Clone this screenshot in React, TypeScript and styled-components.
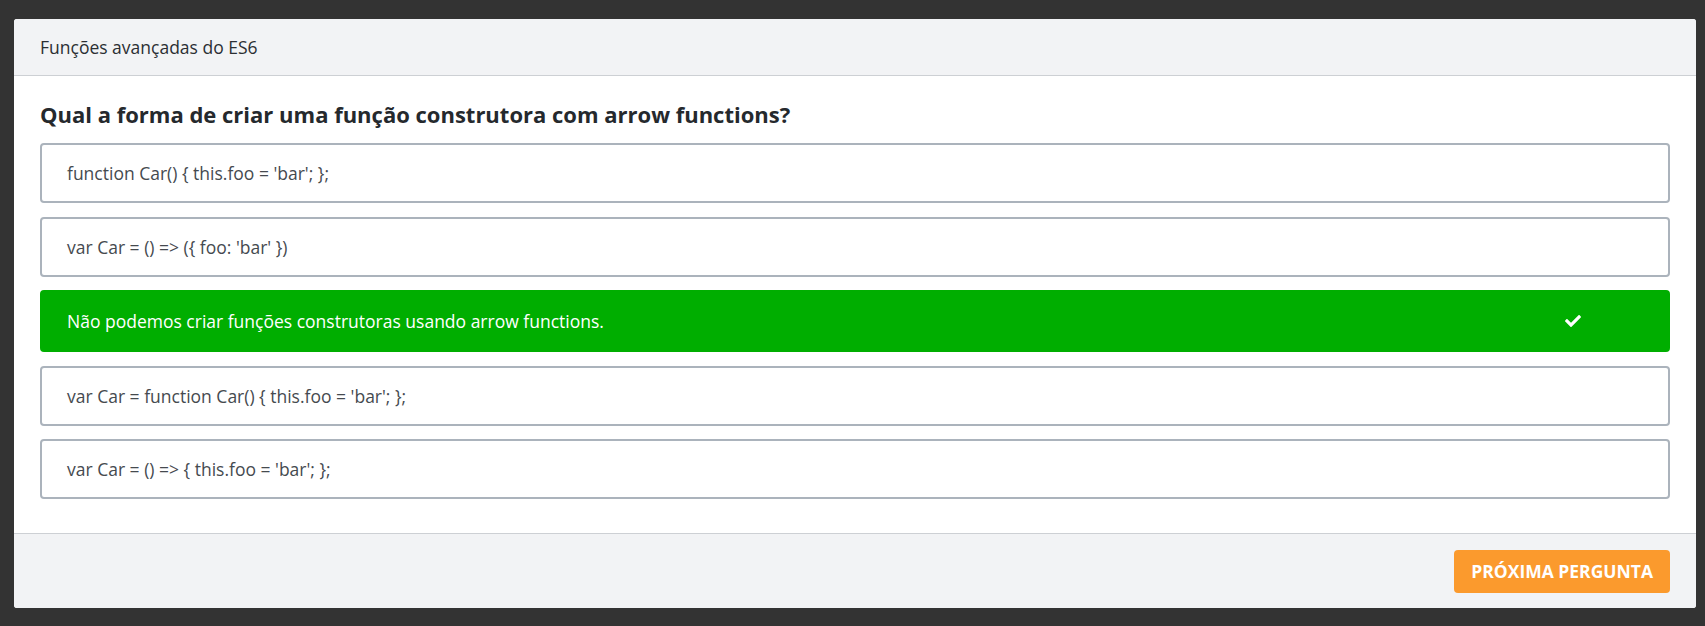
import React from "react";
import styled, { createGlobalStyle } from "styled-components";
import { FaCheck } from "react-icons/fa";

const GlobalStyle = createGlobalStyle`
  html, body {
    margin: 0;
    padding: 0;
    background: #333333;
    font-family: "Open Sans", "Noto Sans", sans-serif;
  }
`;

const Page = styled.div`
  padding: 19px 9px 19px 14px;
`;

const Card = styled.div`
  background: #ffffff;
  border-radius: 3px;
  overflow: hidden;
`;

const Header = styled.div`
  height: 56px;
  display: flex;
  align-items: center;
  padding: 0 26px;
  background: #f2f3f5;
  border-bottom: 1px solid #cdd0d4;
  color: #2b2f33;
  font-size: 17.5px;
`;

const Body = styled.div`
  padding: 23px 26px 34px;
`;

const Question = styled.h2`
  margin: 0 0 14px;
  font-size: 22px;
  line-height: 30px;
  font-weight: 700;
  color: #25292d;
`;

const Options = styled.div`
  display: flex;
  flex-direction: column;
  gap: 13.5px;
`;

const Option = styled.div<{ $correct?: boolean }>`
  box-sizing: border-box;
  height: ${(p) => (p.$correct ? "62px" : "60px")};
  display: flex;
  align-items: center;
  justify-content: space-between;
  padding: 0 87px 0 25px;
  border: 2px solid ${(p) => (p.$correct ? "#00ae00" : "#abb3bc")};
  border-radius: 4px;
  background: ${(p) => (p.$correct ? "#00ae00" : "#ffffff")};
  color: ${(p) => (p.$correct ? "#ffffff" : "#454a4f")};
  font-size: 17.5px;
  font-weight: ${(p) => (p.$correct ? 500 : 400)};
`;

const Footer = styled.div`
  height: 74px;
  display: flex;
  align-items: center;
  justify-content: flex-end;
  padding: 0 26px;
  background: #f2f3f5;
  border-top: 1px solid #cdd0d4;
`;

const NextButton = styled.button`
  height: 43px;
  padding: 0 17px;
  border: none;
  border-radius: 4px;
  background: #fb9a2d;
  color: #ffffff;
  font-family: "Open Sans", "Noto Sans", sans-serif;
  font-size: 17.5px;
  font-weight: 700;
  text-transform: uppercase;
  cursor: pointer;
`;

const answers = [
  { text: "function Car() { this.foo = 'bar'; };" },
  { text: "var Car = () => ({ foo: 'bar' })" },
  { text: "Não podemos criar funções construtoras usando arrow functions.", correct: true },
  { text: "var Car = function Car() { this.foo = 'bar'; };" },
  { text: "var Car = () => { this.foo = 'bar'; };" },
];

const App: React.FC = () => {
  return (
    <>
      <GlobalStyle />
      <Page>
        <Card>
          <Header>Funções avançadas do ES6</Header>
          <Body>
            <Question>Qual a forma de criar uma função construtora com arrow functions?</Question>
            <Options>
              {answers.map((a, i) => (
                <Option key={i} $correct={a.correct}>
                  <span>{a.text}</span>
                  {a.correct && <FaCheck size={16} />}
                </Option>
              ))}
            </Options>
          </Body>
          <Footer>
            <NextButton>Próxima pergunta</NextButton>
          </Footer>
        </Card>
      </Page>
    </>
  );
};

export default App;
